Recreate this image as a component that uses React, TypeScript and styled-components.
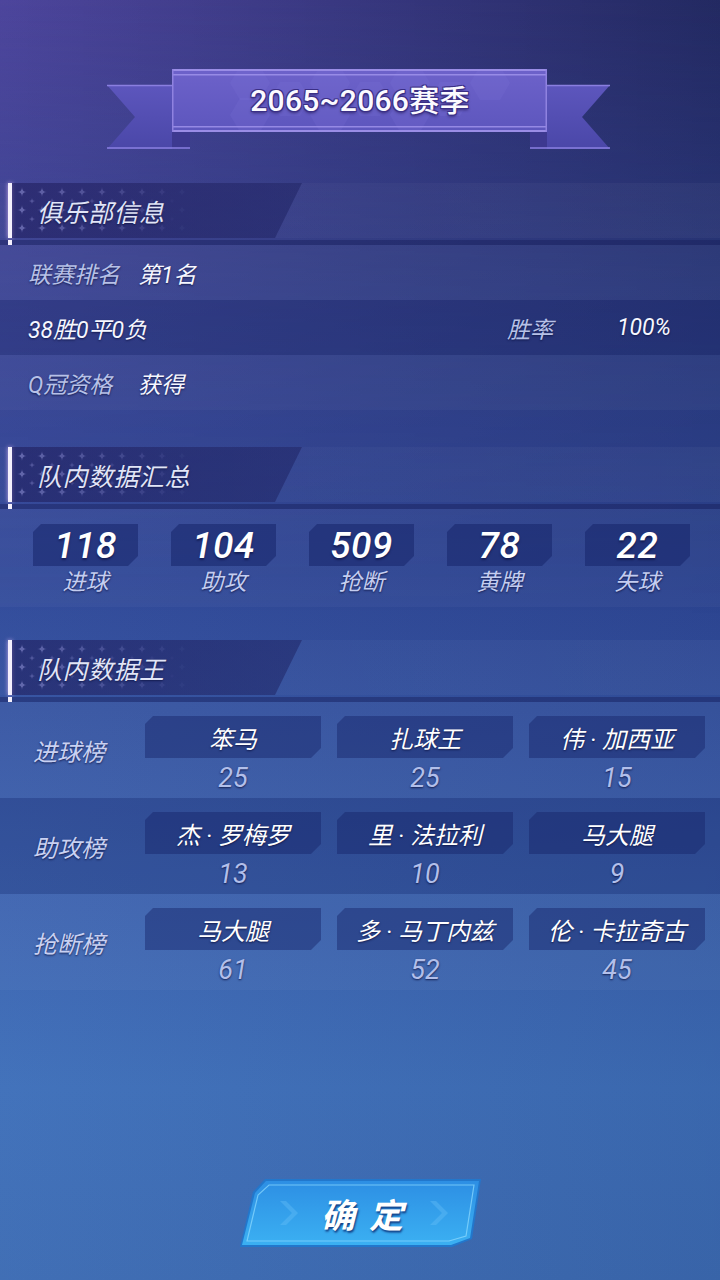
import React from 'react';
import styled, { createGlobalStyle } from 'styled-components';

const GlobalStyle = createGlobalStyle`
  html, body { margin: 0; padding: 0; }
  body {
    background: #33478f;
    font-family: "Roboto", "Noto Sans CJK SC", "Noto Sans", sans-serif;
  }
`;

const Page = styled.div`
  position: relative;
  width: 720px;
  height: 1280px;
  overflow: hidden;
  display: flex;
  flex-direction: column;
  background:
    linear-gradient(90deg, rgba(255, 255, 255, 0.02) 0%, rgba(0, 0, 30, 0.08) 100%),
    linear-gradient(180deg, #383c88 0%, #32418c 20%, #2f4898 45%, #3a60ae 68%, #3f70ba 85%, #3d6cb4 100%);
  &::before {
    content: '';
    position: absolute;
    inset: 0;
    background: linear-gradient(90deg, rgba(98, 76, 178, 0.45) 0%, rgba(18, 28, 68, 0.5) 100%);
    -webkit-mask-image: linear-gradient(180deg, #000 0%, rgba(0, 0, 0, 0.4) 22%, transparent 48%);
    mask-image: linear-gradient(180deg, #000 0%, rgba(0, 0, 0, 0.4) 22%, transparent 48%);
    pointer-events: none;
  }
  & > * {
    position: relative;
  }
`;

/* ---------- Banner ---------- */
const BannerWrap = styled.div`
  height: 80px;
  margin-top: 69px;
  display: flex;
  justify-content: center;
`;

const BannerArt = styled.svg`
  position: absolute;
  left: 0;
  top: 0;
`;

const BannerTitle = styled.h1`
  position: relative;
  margin: 0;
  height: 63px;
  line-height: 64px;
  font-size: 30px;
  font-weight: 500;
  color: #fbfaff;
  letter-spacing: 0.3px;
  text-shadow:
    1px 1px 0 #3b2f86,
    -1px -1px 0 #3b2f86,
    1px -1px 0 #3b2f86,
    -1px 1px 0 #3b2f86,
    0 2px 3px rgba(30, 20, 80, 0.7);
`;

const hexes = [
  [290, 30], [330, 14], [330, 46], [370, 30], [410, 14], [410, 46], [450, 30], [250, 14], [250, 46], [490, 14],
];

function Banner() {
  return (
    <BannerWrap>
      <BannerArt width="720" height="80" viewBox="0 0 720 80">
        <defs>
          <linearGradient id="tailG" x1="0" y1="0" x2="0" y2="1">
            <stop offset="0" stopColor="#5d56bd" />
            <stop offset="1" stopColor="#4a47a8" />
          </linearGradient>
          <linearGradient id="boxG" x1="0" y1="0" x2="0" y2="1">
            <stop offset="0" stopColor="#6d62ca" />
            <stop offset="1" stopColor="#5d56bd" />
          </linearGradient>
        </defs>
        {/* left tail */}
        <polygon points="107,16 190,16 190,80 107,80 135,48" fill="url(#tailG)" />
        <polygon points="172,63 190,63 190,80 172,80" fill="#3d3990" />
        <line x1="107" y1="16.5" x2="190" y2="16.5" stroke="#8a7fe0" strokeWidth="1.5" />
        <line x1="107" y1="79" x2="190" y2="79" stroke="#8a7fe0" strokeWidth="1.5" />
        {/* right tail */}
        <polygon points="530,16 610,16 582,48 610,80 530,80" fill="url(#tailG)" />
        <polygon points="530,63 547,63 547,80 530,80" fill="#3d3990" />
        <line x1="530" y1="16.5" x2="610" y2="16.5" stroke="#8a7fe0" strokeWidth="1.5" />
        <line x1="530" y1="79" x2="610" y2="79" stroke="#8a7fe0" strokeWidth="1.5" />
        {/* center box */}
        <rect x="172" y="0" width="375" height="63" fill="url(#boxG)" />
        {hexes.map(([x, y], i) => (
          <polygon
            key={i}
            points={`${x - 20},${y} ${x - 10},${y - 17} ${x + 10},${y - 17} ${x + 20},${y} ${x + 10},${y + 17} ${x - 10},${y + 17}`}
            fill="#7c70d6"
            opacity="0.22"
          />
        ))}
        <rect x="172" y="0" width="375" height="2" fill="#9a8de6" />
        <rect x="172" y="5" width="375" height="1.5" fill="#a396ee" opacity="0.8" />
        <rect x="172" y="57" width="375" height="1.5" fill="#a396ee" opacity="0.8" />
        <rect x="172" y="61" width="375" height="2" fill="#9a8de6" />
        <rect x="172" y="0" width="1.5" height="63" fill="#8f82e0" />
        <rect x="545.5" y="0" width="1.5" height="63" fill="#8f82e0" />
      </BannerArt>
      <BannerTitle>2065~2066赛季</BannerTitle>
    </BannerWrap>
  );
}

/* ---------- Section header ---------- */
const Section = styled.section<{ $gap: number }>`
  margin-top: ${(p) => p.$gap}px;
  display: flex;
  flex-direction: column;
`;

const HeadRow = styled.div`
  height: 55px;
  display: flex;
  padding-left: 8px;
  background: linear-gradient(90deg, rgba(255, 255, 255, 0.015), rgba(255, 255, 255, 0.035));
`;

const Accent = styled.div`
  width: 4px;
  background: #f4f0fd;
  box-shadow: 0 0 4px rgba(230, 190, 255, 0.8);
`;

const HeadBar = styled.div`
  position: relative;
  width: 290px;
  display: flex;
  align-items: center;
  padding-left: 25px;
  box-sizing: border-box;
  background: linear-gradient(90deg, rgba(30, 28, 92, 0.6), rgba(28, 32, 96, 0.5));
  clip-path: polygon(0 0, 100% 0, calc(100% - 27px) 100%, 0 100%);
`;

const Sparkles = styled.svg`
  position: absolute;
  left: 0;
  top: 0;
`;

const HeadTitle = styled.h2`
  position: relative;
  margin: 0;
  font-size: 25px;
  font-weight: 400;
  font-style: italic;
  color: #e1e5f7;
  letter-spacing: 0.5px;
  text-shadow: 0 1px 2px rgba(10, 15, 60, 0.7);
`;

const HeadRule = styled.div`
  margin-top: 2px;
  height: 5px;
  padding-left: 8px;
  background: rgba(24, 32, 92, 0.45);
`;

const RuleDot = styled.div`
  width: 4px;
  height: 5px;
  background: #f4f0fd;
`;

function star(cx: number, cy: number, r: number) {
  return `M${cx},${cy - r} Q${cx},${cy} ${cx + r},${cy} Q${cx},${cy} ${cx},${cy + r} Q${cx},${cy} ${cx - r},${cy} Q${cx},${cy} ${cx},${cy - r}Z`;
}

const stars: { d: string; o: number }[] = [];
[9, 27, 45].forEach((y) => {
  for (let i = 0; i < 9; i++) {
    stars.push({ d: star(10 + i * 20, y, 5), o: 0.5 * (1 - i / 9) });
  }
});
[18, 36].forEach((y) => {
  for (let i = 0; i < 8; i++) {
    stars.push({ d: star(20 + i * 20, y, 3.5), o: 0.35 * (1 - i / 8) });
  }
});

function SectionHeader({ title }: { title: string }) {
  return (
    <>
      <HeadRow>
        <Accent />
        <HeadBar>
          <Sparkles width="200" height="55" viewBox="0 0 200 55">
            {stars.map((s, i) => (
              <path key={i} d={s.d} fill="#9a9be0" opacity={s.o} />
            ))}
          </Sparkles>
          <HeadTitle>{title}</HeadTitle>
        </HeadBar>
      </HeadRow>
      <HeadRule>
        <RuleDot />
      </HeadRule>
    </>
  );
}

/* ---------- Club info ---------- */
const toneBg = (t: 'light' | 'dark') =>
  t === 'dark' ? 'rgba(20, 28, 85, 0.22)' : 'rgba(255, 255, 255, 0.03)';

const InfoRow = styled.div<{ $tone: 'light' | 'dark' }>`
  height: 55px;
  display: grid;
  grid-template-columns: 110px 1fr 110px 103px;
  align-items: center;
  padding-left: 28px;
  background: ${(p) => toneBg(p.$tone)};
`;

const InfoText = styled.span<{ $value?: boolean; $span?: boolean }>`
  font-size: 23px;
  font-style: italic;
  white-space: nowrap;
  grid-column: ${(p) => (p.$span ? 'span 2' : 'auto')};
  color: ${(p) => (p.$value ? '#f6f7ff' : '#b7c1e7')};
  text-shadow: 0 1px 2px rgba(10, 15, 60, 0.75);
`;

/* ---------- Team totals ---------- */
const StatsBand = styled.div`
  height: 98px;
  box-sizing: border-box;
  padding: 15px 0 0 33px;
  display: grid;
  grid-template-columns: repeat(5, 105px);
  column-gap: 33px;
  align-items: start;
  background: rgba(255, 255, 255, 0.03);
`;

const StatCell = styled.div`
  display: flex;
  flex-direction: column;
  align-items: center;
`;

const cut = `polygon(8px 0, 100% 0, 100% calc(100% - 10px), calc(100% - 10px) 100%, 0 100%, 0 8px)`;

const StatBox = styled.div`
  width: 105px;
  height: 42px;
  display: flex;
  align-items: center;
  justify-content: center;
  background: rgba(22, 36, 105, 0.55);
  clip-path: ${cut};
`;

const StatNumber = styled.span`
  font-size: 37px;
  font-style: italic;
  font-weight: 500;
  color: #ffffff;
  letter-spacing: 0.5px;
  text-shadow: 0 2px 2px rgba(10, 15, 60, 0.6);
`;

const StatLabel = styled.span`
  margin-top: 1px;
  font-size: 23px;
  line-height: 32px;
  font-style: italic;
  color: #c4cdf0;
  text-shadow: 0 1px 2px rgba(10, 15, 60, 0.75);
`;

/* ---------- Leaders ---------- */
const LeaderRow = styled.div<{ $tone: 'light' | 'dark' }>`
  height: 96px;
  display: grid;
  grid-template-columns: 96px repeat(3, 176px);
  column-gap: 16px;
  padding-left: 33px;
  background: ${(p) => toneBg(p.$tone)};
`;

const LeaderLabel = styled.span`
  align-self: center;
  font-size: 24px;
  font-style: italic;
  color: #c9d1f2;
  white-space: nowrap;
  text-shadow: 0 1px 2px rgba(10, 15, 60, 0.75);
`;

const LeaderCell = styled.div`
  padding-top: 14px;
  display: flex;
  flex-direction: column;
  align-items: center;
`;

const NameBox = styled.div`
  width: 176px;
  height: 42px;
  display: flex;
  align-items: center;
  justify-content: center;
  font-size: 24px;
  font-style: italic;
  color: #ffffff;
  white-space: nowrap;
  background: rgba(22, 36, 105, 0.45);
  clip-path: ${cut};
  text-shadow: 0 1px 2px rgba(10, 15, 60, 0.8);
`;

const LeaderValue = styled.span`
  margin-top: 5px;
  font-size: 27px;
  line-height: 30px;
  font-style: italic;
  color: #b2bfea;
  text-shadow: 0 1px 2px rgba(10, 15, 60, 0.8);
`;

/* ---------- Footer button ---------- */
const Footer = styled.div`
  flex: 1;
  display: flex;
  align-items: flex-end;
  justify-content: center;
  padding-bottom: 33px;
`;

const ConfirmButton = styled.button`
  position: relative;
  width: 241px;
  height: 68px;
  padding: 0;
  border: none;
  background: transparent;
  display: flex;
  align-items: center;
  justify-content: center;
  cursor: pointer;
`;

const ButtonArt = styled.svg`
  position: absolute;
  left: 0;
  top: 0;
`;

const ButtonText = styled.span`
  position: relative;
  font-family: "Noto Sans CJK SC", sans-serif;
  font-size: 34px;
  font-weight: 700;
  font-style: italic;
  color: #ffffff;
  letter-spacing: 14px;
  margin-left: 18px;
  text-shadow: 1px 2px 2px rgba(10, 40, 110, 0.8);
`;

function Confirm() {
  return (
    <ConfirmButton>
      <ButtonArt width="241" height="68" viewBox="0 0 241 68">
        <defs>
          <linearGradient id="btnG" x1="0" y1="0" x2="0" y2="1">
            <stop offset="0" stopColor="#2d8fe4" />
            <stop offset="1" stopColor="#3bb0f2" />
          </linearGradient>
        </defs>
        <polygon points="25,0 241,0 232,60 212,68 0,68 13,13" fill="#2277cc" />
        <polygon points="26,2 239,2 230,59 211,66 2,66 15,14" fill="url(#btnG)" />
        <polygon points="29,6 234,6 226,57 209,62 7,62 18,16" fill="none" stroke="#8fdcff" strokeWidth="1.2" opacity="0.7" />
        <path d="M40,22 L52,34 L40,46 L46,46 L58,34 L46,22Z" fill="#6cc4fa" opacity="0.35" />
        <path d="M190,22 L202,34 L190,46 L196,46 L208,34 L196,22Z" fill="#6cc4fa" opacity="0.35" />
      </ButtonArt>
      <ButtonText>确定</ButtonText>
    </ConfirmButton>
  );
}

/* ---------- Data ---------- */
const totals = [
  { n: '118', l: '进球' },
  { n: '104', l: '助攻' },
  { n: '509', l: '抢断' },
  { n: '78', l: '黄牌' },
  { n: '22', l: '失球' },
];

const leaders: { label: string; tone: 'light' | 'dark'; items: [string, string][] }[] = [
  { label: '进球榜', tone: 'light', items: [['笨马', '25'], ['扎球王', '25'], ['伟 · 加西亚', '15']] },
  { label: '助攻榜', tone: 'dark', items: [['杰 · 罗梅罗', '13'], ['里 · 法拉利', '10'], ['马大腿', '9']] },
  { label: '抢断榜', tone: 'light', items: [['马大腿', '61'], ['多 · 马丁内兹', '52'], ['伦 · 卡拉奇古', '45']] },
];

export default function App() {
  return (
    <>
      <GlobalStyle />
      <Page>
        <Banner />

        <Section $gap={34}>
          <SectionHeader title="俱乐部信息" />
          <InfoRow $tone="light">
            <InfoText>联赛排名</InfoText>
            <InfoText $value>第1名</InfoText>
          </InfoRow>
          <InfoRow $tone="dark">
            <InfoText $value $span>38胜0平0负</InfoText>
            <InfoText>胜率</InfoText>
            <InfoText $value>100%</InfoText>
          </InfoRow>
          <InfoRow $tone="light">
            <InfoText>Q冠资格</InfoText>
            <InfoText $value>获得</InfoText>
          </InfoRow>
        </Section>

        <Section $gap={37}>
          <SectionHeader title="队内数据汇总" />
          <StatsBand>
            {totals.map((t) => (
              <StatCell key={t.l}>
                <StatBox>
                  <StatNumber>{t.n}</StatNumber>
                </StatBox>
                <StatLabel>{t.l}</StatLabel>
              </StatCell>
            ))}
          </StatsBand>
        </Section>

        <Section $gap={33}>
          <SectionHeader title="队内数据王" />
          {leaders.map((row) => (
            <LeaderRow key={row.label} $tone={row.tone}>
              <LeaderLabel>{row.label}</LeaderLabel>
              {row.items.map(([name, val], i) => (
                <LeaderCell key={i}>
                  <NameBox>{name}</NameBox>
                  <LeaderValue>{val}</LeaderValue>
                </LeaderCell>
              ))}
            </LeaderRow>
          ))}
        </Section>

        <Footer>
          <Confirm />
        </Footer>
      </Page>
    </>
  );
}
